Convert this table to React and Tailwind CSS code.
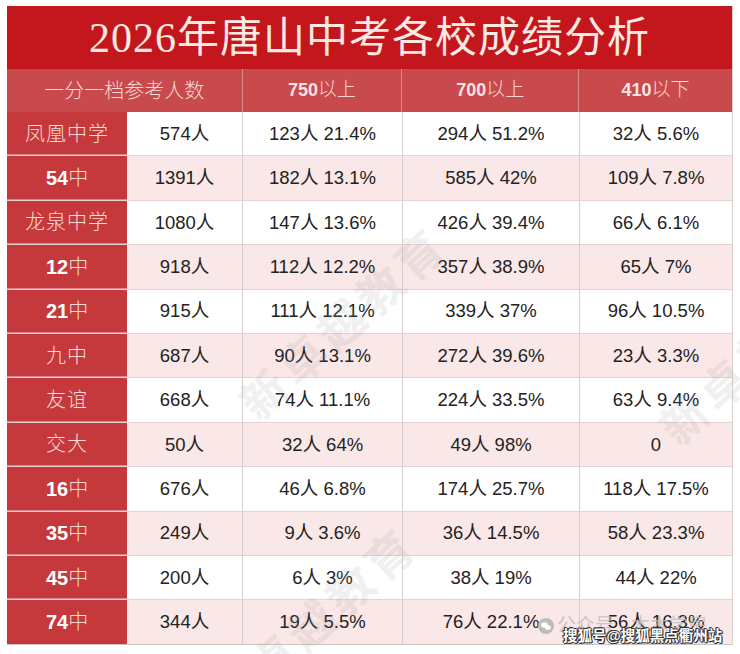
import React from 'react';

const rows = [
  { name: '凤凰中学', total: '574人', a: '123人 21.4%', b: '294人 51.2%', c: '32人 5.6%' },
  { name: '54中', total: '1391人', a: '182人 13.1%', b: '585人 42%', c: '109人 7.8%' },
  { name: '龙泉中学', total: '1080人', a: '147人 13.6%', b: '426人 39.4%', c: '66人 6.1%' },
  { name: '12中', total: '918人', a: '112人 12.2%', b: '357人 38.9%', c: '65人 7%' },
  { name: '21中', total: '915人', a: '111人 12.1%', b: '339人 37%', c: '96人 10.5%' },
  { name: '九中', total: '687人', a: '90人 13.1%', b: '272人 39.6%', c: '23人 3.3%' },
  { name: '友谊', total: '668人', a: '74人 11.1%', b: '224人 33.5%', c: '63人 9.4%' },
  { name: '交大', total: '50人', a: '32人 64%', b: '49人 98%', c: '0' },
  { name: '16中', total: '676人', a: '46人 6.8%', b: '174人 25.7%', c: '118人 17.5%' },
  { name: '35中', total: '249人', a: '9人 3.6%', b: '36人 14.5%', c: '58人 23.3%' },
  { name: '45中', total: '200人', a: '6人 3%', b: '38人 19%', c: '44人 22%' },
  { name: '74中', total: '344人', a: '19人 5.5%', b: '76人 22.1%', c: '56人 16.3%' },
];

const serif = "font-['Liberation_Serif','Noto_Sans_CJK_SC',serif]";
const sans = "font-['Liberation_Sans','Noto_Sans_CJK_SC',sans-serif]";

// "54中" -> bold digits + light CJK
const SchoolName = ({ name }) => {
  const m = name.match(/^(\d+)(.*)$/);
  if (!m) return <span className="font-light tracking-[1px]">{name}</span>;
  return (
    <span>
      <span className={`${sans} font-bold text-white`}>{m[1]}</span>
      <span className="font-light">{m[2]}</span>
    </span>
  );
};

const Watermark = ({ className }) => (
  <div
    className={`absolute text-[46px] font-bold text-[#9a9a9a] opacity-[0.14] tracking-[6px] whitespace-nowrap pointer-events-none -rotate-[42deg] ${serif} ${className}`}
  >
    新卓越教育
  </div>
);

const cell = `flex items-center justify-center text-[18.5px] text-[#222] ${sans}`;

export default function App() {
  return (
    <div className="relative w-[740px] h-[654px] bg-white overflow-hidden">
      <div className="pt-[6px] pl-[7px]">
        <div className="w-[726px] border-r border-[#d8cfcf]">
          {/* Title */}
          <div
            className={`h-[63px] bg-[#c4161d] flex items-center justify-center text-[42px] leading-none text-[#fbe9e2] tracking-[1px] ${serif}`}
          >
            2026年唐山中考各校成绩分析
          </div>

          {/* Header */}
          <div className={`h-[43px] flex bg-[#c94a4d] text-[#f6d8d6] text-[20px] ${serif}`}>
            <div className="w-[236px] flex items-center justify-center border-r border-[#d98a8c] font-light">
              一分一档参考人数
            </div>
            {['750以上', '700以上', '410以下'].map((t, i) => (
              <div
                key={t}
                className={`flex items-center justify-center ${
                  i === 0 ? 'w-[160px] border-r border-[#d98a8c]' : i === 1 ? 'w-[177px] border-r border-[#d98a8c]' : 'w-[153px]'
                }`}
              >
                <span className={`${sans} font-bold text-[18px] text-[#fbe3e1]`}>{t.slice(0, 3)}</span>
                <span className="font-light text-[19px]">{t.slice(3)}</span>
              </div>
            ))}
          </div>

          {/* Rows */}
          {rows.map((r, i) => (
            <div
              key={r.name}
              className={`h-[44.4px] flex ${i % 2 === 0 ? 'bg-white' : 'bg-[#fae7e7]'} ${
                i < rows.length - 1 ? 'border-b border-[#e4d2d2]' : 'border-b border-[#cfc4c4]'
              }`}
            >
              <div
                className={`w-[120px] flex items-center justify-center bg-[#c5393c] text-[#f7dbd8] text-[20px] ${serif} ${
                  i < rows.length - 1 ? 'shadow-[inset_0_-1px_0_#d98587]' : ''
                }`}
              >
                <SchoolName name={r.name} />
              </div>
              <div className={`w-[116px] border-r border-[#d9cdcd] ${cell}`}>{r.total}</div>
              <div className={`w-[160px] border-r border-[#d9cdcd] ${cell}`}>{r.a}</div>
              <div className={`w-[177px] border-r border-[#d9cdcd] ${cell}`}>{r.b}</div>
              <div className={`w-[152px] ${cell}`}>{r.c}</div>
            </div>
          ))}
        </div>
      </div>

      {/* Watermarks */}
      <Watermark className="left-[215px] top-[290px]" />
      <Watermark className="left-[635px] top-[315px]" />
      <Watermark className="left-[185px] top-[590px]" />

      {/* 公众号 mark */}
      <div className={`absolute left-[538px] top-[612px] flex items-center gap-[3px] text-[19px] text-[#bdbdbd] whitespace-nowrap ${sans}`}>
        <svg width="16" height="16" viewBox="0 0 16 16">
          <circle cx="8" cy="8" r="8" fill="#bcbcbc" />
          <ellipse cx="6.5" cy="7" rx="3.4" ry="2.8" fill="#fff" />
          <ellipse cx="9.8" cy="9.4" rx="2.8" ry="2.3" fill="#fff" />
        </svg>
        <span className="opacity-80">公众号 · 木木学房</span>
      </div>

      {/* 搜狐 caption */}
      <div
        className={`absolute left-[563px] top-[629px] text-[14.5px] font-bold text-white leading-none whitespace-nowrap ${sans} [text-shadow:1px_0_0_#333,-1px_0_0_#333,0_1px_0_#333,0_-1px_0_#333,1px_1px_0_#333,-1px_-1px_0_#333]`}
      >
        搜狐号@搜狐黑点衢州站
      </div>
    </div>
  );
}
